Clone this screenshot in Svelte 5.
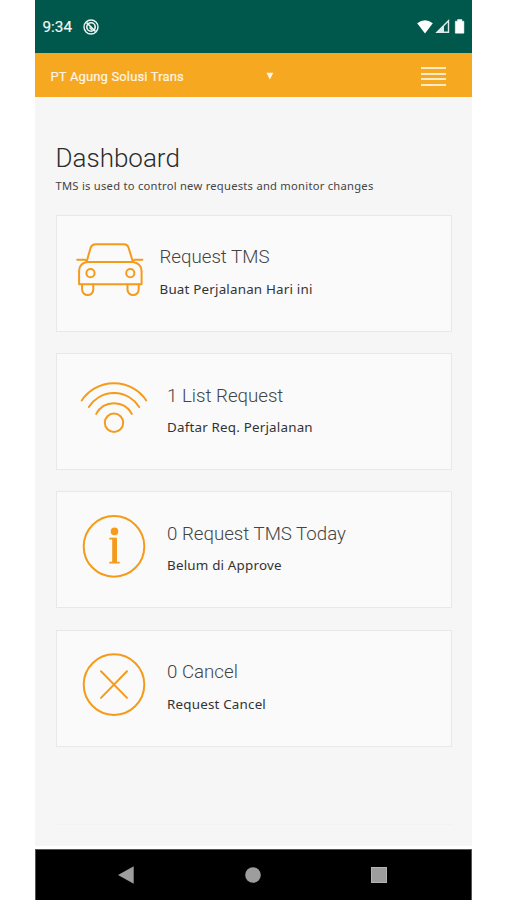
<script>
  const cards = [
    { icon: 'car', title: 'Request TMS', detail: 'Buat Perjalanan Hari ini' },
    { icon: 'wifi', title: '1 List Request', detail: 'Daftar Req. Perjalanan' },
    { icon: 'info', title: '0 Request TMS Today', detail: 'Belum di Approve' },
    { icon: 'cancel', title: '0 Cancel', detail: 'Request Cancel' }
  ];
</script>

<div class="phone">
  <header class="status">
    <span class="time">9:34</span>
    <svg class="notice" width="16" height="16" viewBox="0 0 16 16" fill="none" stroke="#eef5f3">
      <circle cx="8" cy="8" r="7" stroke-width="1.4" />
      <circle cx="8" cy="8" r="4.2" stroke-width="1.6" />
      <path d="M3.5 3.5 L12.5 12.5" stroke-width="1.7" />
      <path d="M6.5 8.5 L9.2 11.2" stroke-width="1.3" />
    </svg>
    <svg class="signals" width="50" height="18" viewBox="0 0 50 18">
      <path d="M0.2 5.2 Q8 -0.9 15.8 5.2 L8 15.5 Z" fill="#fff" />
      <path d="M20 14.3 L31.5 2.8 V14.3 Z" fill="none" stroke="#dce9e6" stroke-width="1.4" />
      <path d="M19 15 L27 7 V15 Z" fill="#dce9e6" />
      <path d="M40.5 1.6 h4.4 v1.6 h2 v12 h-8.6 v-12 h2.2 Z" fill="#fff" stroke="#fff" stroke-width=".5" stroke-linejoin="round" />
    </svg>
  </header>
  <div class="appbar">
    <span class="company">PT Agung Solusi Trans</span>
    <svg class="caret" width="8" height="8" viewBox="0 0 8 8"><path d="M.5 .8 H7.3 L3.9 7.6 Z" fill="#fff8e6" /></svg>
    <div class="menu"><i></i><i></i><i></i><i></i></div>
  </div>
  <main>
    <h1>Dashboard</h1>
    <p class="intro">TMS is used to control new requests and monitor changes</p>
    <div class="cards">
      {#each cards as card}
        <section class="card {card.icon}">
          <svg class="icon" width="72" height="68" viewBox="0 0 72 68" fill="none" stroke="#f49b1b" stroke-width="2" stroke-linecap="round" stroke-linejoin="round">
            {#if card.icon === 'car'}
              <path d="M11 22.5 L14.7 9.5 Q16 6.2 19.5 6.2 H48 Q51.5 6.2 52.5 9.5 L56.5 22.5" />
              <path d="M1.2 21.8 H9 L11 23.5 M66.4 21.8 H58.5 L56.5 23.5" />
              <path d="M11 24 H56.8 Q65.6 25.5 65.6 33 V46.2 H3.1 V33 Q3.1 25.5 11 24 Z" />
              <circle cx="14.5" cy="35.2" r="4.1" />
              <circle cx="54.3" cy="35.2" r="4.1" />
              <path d="M6.1 46.5 V51.5 a5.6 5.6 0 0 0 11.2 0 V46.5 M51.5 46.5 V51.5 a5.6 5.6 0 0 0 11.2 0 V46.5" />
            {:else if card.icon === 'wifi'}
              <path d="M5.7 24.5 A38.9 38.9 0 0 1 70.3 24.5" />
              <path d="M12.8 31 A29.7 29.7 0 0 1 63.2 31" />
              <path d="M20.2 37.9 A20.2 20.2 0 0 1 55.8 37.9" />
              <circle cx="38" cy="46.8" r="9.2" />
            {:else if card.icon === 'info'}
              <circle cx="38" cy="31.4" r="30.3" />
              <circle cx="38.5" cy="16.4" r="3.8" fill="#f49b1b" stroke="none" />
              <path d="M34 23.7 H38.5 M34 47.7 H43" stroke-width="1.8" />
              <path d="M38.6 22.8 V47.7" stroke-width="4.8" stroke-linecap="butt" />
            {:else}
              <circle cx="38" cy="31.6" r="30.3" />
              <path d="M25 18.3 L51 44.9 M51 18.3 L25 44.9" />
            {/if}
          </svg>
          <div class="copy">
            <h2>{card.title}</h2>
            <p>{card.detail}</p>
          </div>
        </section>
      {/each}
    </div>
    <div class="rule"></div>
  </main>
  <nav>
    <svg width="18" height="20" viewBox="0 0 18 20"><path d="M0 10 L15.7 1.2 V18.8 Z" fill="#9d9d9d" /></svg>
    <svg width="16" height="16" viewBox="0 0 16 16"><circle cx="8" cy="8" r="7.8" fill="#9d9d9d" /></svg>
    <svg width="16" height="16" viewBox="0 0 16 16"><rect x=".5" y=".5" width="15" height="15" fill="#9d9d9d" stroke="#b4b4b4" /></svg>
  </nav>
</div>

<style>
  :global(body) { background: #fff; }
  * { box-sizing: border-box; }
  .phone { width: 437.5px; height: 900px; margin-left: 34.5px; display: flex; flex-direction: column; overflow: hidden; font-family: Roboto, sans-serif; }
  .status { height: 53px; flex: none; background: #00574b; display: flex; align-items: center; padding: 1px 5.5px 0 8px; }
  .time { color: #eff6f4; font: 400 15.3px/20px Roboto, sans-serif; width: 40.5px; white-space: nowrap; -webkit-text-stroke: .2px #eff6f4; }
  .signals { margin-left: auto; }
  .appbar { height: 44px; flex: none; background: #f6a821; display: flex; align-items: center; padding: 2px 26px 0 16px; }
  .company { width: 215.5px; color: #fff6e5; font-size: 13px; line-height: 18px; letter-spacing: .15px; padding-top: 1px; white-space: nowrap; -webkit-text-stroke: .2px #fff6e5; }
  .menu { margin: 1px 0 0 auto; width: 25px; display: flex; flex-direction: column; gap: 3.35px; }
  .menu i { height: 2px; background: #fdebc8; }
  main { height: 749px; flex: none; background: #f6f6f6; padding: 45px 20.5px 0 21px; }
  h1 { margin: 0; color: #2c2c2c; font-weight: 300; font-size: 26px; line-height: 32px; }
  .intro { margin: 4px 0 0; color: #444; font: 11.2px/16px "Noto Sans", sans-serif; letter-spacing: .25px; white-space: nowrap; }
  .cards { display: flex; flex-direction: column; gap: 21.4px; margin-top: 20.5px; }
  .card { height: 117px; display: flex; background: #fafafa; border: 1px solid #e8e8e8; padding-top: 22.3px; padding-left: 19.5px; }
  .icon { flex: none; }
  .copy { padding: 6.4px 0 0 19px; }
  .car .copy { padding-left: 11.5px; }
  h2 { margin: 0; color: #444; font-weight: 300; font-size: 18.7px; line-height: 26px; white-space: nowrap; }
  .copy p { margin: 8.5px 0 0; color: #333; font: 13.4px/20px "Noto Sans", sans-serif; letter-spacing: .19px; white-space: nowrap; }
  .rule { height: 1px; background: #f2f2f2; margin-top: 77px; }
  nav { height: 51px; flex: none; margin-top: 3px; background: #000; border: 1px solid #555; border-bottom: 0; display: flex; align-items: center; justify-content: space-between; padding: 0 84px 0 82px; }
</style>
